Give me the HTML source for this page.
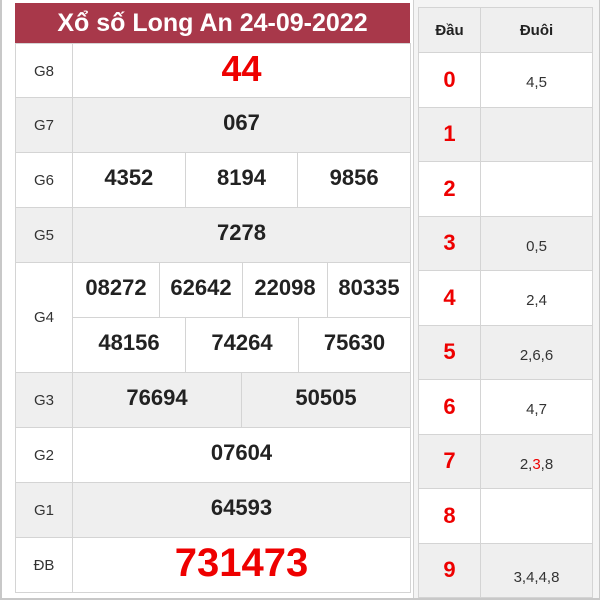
<!DOCTYPE html><html><head><meta charset="utf-8"><style>
body{margin:0;width:600px;height:600px;background:#fff;position:relative;overflow:hidden;font-family:"Liberation Sans",Arial,sans-serif}
.a{position:absolute;box-sizing:border-box;display:flex;align-items:center;justify-content:center}
.b{border:1px solid #d4d4d4}
.g{background:#efefef}.w{background:#fff}
.lab{font-size:15px;color:#333}
.n{font-size:22px;font-weight:bold;color:#222}
.r{color:#e00}
.t{font-size:15px;color:#333}
.h{font-weight:bold;font-size:15px;color:#222}
.d{font-size:22px;font-weight:bold;color:#e00}
</style></head><body>
<div class="a" style="left:0;top:0;width:600px;height:600px;border:2px solid #c8c8c8;border-top:none"></div>
<div class="a" style="left:413px;top:0;width:186px;height:598px;background:#f4f4f4;border-left:1px solid #d0d0d0"></div>
<div class="a" style="left:15px;top:3px;width:395px;height:40px;background:#a8384a;color:#fff;font-size:25px;font-weight:bold">Xổ số Long An 24-09-2022</div>
<div id="L"></div>
<script>
var L='';
function cell(x,y,w,h,cl,txt,st){L+='<div class="a b '+cl+'" style="left:'+x+'px;top:'+y+'px;width:'+w+'px;height:'+h+'px;'+(st||'')+'">'+txt+'</div>';}
var rows=[['G8',43,['<span class="r" style="font-size:36px">44</span>'],'w'],['G7',97,['067'],'g'],['G6',152,['4352','8194','9856'],'w'],['G5',207,['7278'],'g'],['G3',372,['76694','50505'],'g'],['G2',427,['07604'],'w'],['G1',482,['64593'],'g'],['ĐB',537,['<span class="r" style="font-size:40px">731473</span>'],'w']];
rows.forEach(function(r){var y=r[1],h=56;cell(15,y,58,h,r[3]+' lab',r[0]);var n=r[2].length,w=(410-72)/n;r[2].forEach(function(t,i){cell(72+i*w,y,w+1,h,r[3]+' n',t,'padding-bottom:4px')})});
cell(15,262,58,111,'w lab','G4');
var xs=[72,159,242,327,410],t4=['08272','62642','22098','80335'];for(var i=0;i<4;i++)cell(xs[i],262,xs[i+1]-xs[i]+1,56,'w n',t4[i],'padding-bottom:4px');
var x2=[72,185,298,410],t5=['48156','74264','75630'];for(i=0;i<3;i++)cell(x2[i],317,x2[i+1]-x2[i]+1,56,'w n',t5[i],'padding-bottom:4px');
cell(418,7,63,46,'g h','Đầu');
cell(480,7,113,46,'g h','Đuôi');
var d=['4,5','','','0,5','2,4','2,6,6','4,7','2,<span class="r">3</span>,8','','3,4,4,8'];
for(i=0;i<10;i++){var y=52+i*54.5,c=i%2?'g':'w';cell(418,y,63,55.5,c+' d',''+i);cell(480,y,113,55.5,c+' t',d[i],'padding-top:'+(i==9?14:6)+'px');}
document.getElementById('L').innerHTML=L;
</script></body></html>
